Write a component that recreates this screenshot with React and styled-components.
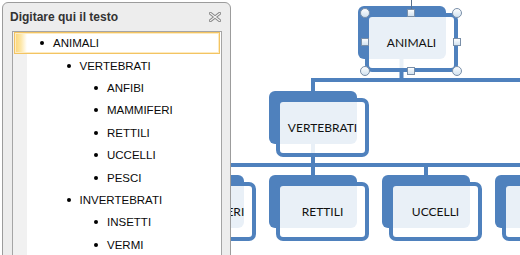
import React from 'react';
import styled, {createGlobalStyle} from 'styled-components';

const GlobalStyle = createGlobalStyle`
  html, body {
    margin: 0;
    padding: 0;
    background: #ffffff;
  }
  body {
    width: 520px;
    height: 255px;
    overflow: hidden;
  }
`;

const BLUE = '#4f81bd';

const Stage = styled.div`
  position: relative;
  width: 520px;
  height: 255px;
  overflow: hidden;
  background: #ffffff;
`;

const Canvas = styled.div`
  position: relative;
  width: 520px;
  height: 255px;
`;

const Layer = styled.svg`
  position: absolute;
  left: 0;
  top: 0;
  width: 520px;
  height: 255px;
  overflow: visible;
`;

const NodeWrap = styled.div`
  position: absolute;
  left: ${p => p.$x}px;
  top: ${p => p.$y}px;
  width: 100px;
  height: 66px;
`;

const Back = styled.div`
  position: absolute;
  left: 0;
  top: 0;
  width: 88px;
  height: 53px;
  border-radius: 6px;
  background: ${BLUE};
`;

const Front = styled.div`
  position: absolute;
  left: 7px;
  top: 7px;
  width: 93px;
  height: 59px;
  box-sizing: border-box;
  border: 4px solid ${BLUE};
  border-radius: 7px;
  background: rgba(255, 255, 255, 0.88);
  display: flex;
  align-items: center;
  justify-content: center;
  font-family: "Lato", "Liberation Sans", sans-serif;
  font-size: 12px;
  color: #111;
`;

const Panel = styled.div`
  position: absolute;
  left: 2px;
  top: 2px;
  width: 229px;
  height: 300px;
  box-sizing: border-box;
  border: 1px solid #9c9c9c;
  border-radius: 6px;
  background: #ededed;
  display: flex;
  flex-direction: column;
`;

const TitleBar = styled.div`
  height: 28px;
  display: flex;
  align-items: center;
  justify-content: space-between;
  padding: 0 9px 0 7px;
  font-family: "Liberation Sans", Arial, sans-serif;
  font-weight: bold;
  font-size: 12px;
  color: #333333;
`;

const ListBox = styled.div`
  margin-left: 9px;
  width: 210px;
  flex: 1;
  box-sizing: border-box;
  border: 1px solid #a5a5a5;
  background: linear-gradient(to right, #f1f1f1 0 14px, #ffffff 14px);
`;

const Row = styled.div`
  height: 22.4px;
  box-sizing: border-box;
  display: flex;
  align-items: center;
  gap: 9px;
  padding-left: ${p => 26 + p.$level * 27.5}px;
  font-family: "Liberation Sans", Arial, sans-serif;
  font-size: 11.5px;
  color: #0a0a0a;
  ${p => p.$active && `
    margin: 0 1px;
    padding-left: ${25 + p.$level * 27.5}px;
    border: 1px solid #f3c462;
    box-shadow: inset 0 0 0 1px #fdebc2;
    background: linear-gradient(to right, #fbd679 0, #fde7a8 6px, #ffffff 12px);
  `}
`;

const Bullet = styled.span`
  width: 4px;
  height: 4px;
  border-radius: 50%;
  background: #000;
  flex: none;
`;

const items = [
  [0, 'ANIMALI'],
  [1, 'VERTEBRATI'],
  [2, 'ANFIBI'],
  [2, 'MAMMIFERI'],
  [2, 'RETTILI'],
  [2, 'UCCELLI'],
  [2, 'PESCI'],
  [1, 'INVERTEBRATI'],
  [2, 'INSETTI'],
  [2, 'VERMI'],
];

const nodes = [
  {x: 358, y: 6, label: 'ANIMALI'},
  {x: 269, y: 91, label: 'VERTEBRATI'},
  {x: 156, y: 175, label: 'MAMMIFERI'},
  {x: 269, y: 175, label: 'RETTILI'},
  {x: 382, y: 175, label: 'UCCELLI'},
  {x: 495, y: 175, label: 'PESCI'},
];

const CloseIcon = () => (
  <svg width="12" height="10" viewBox="0 0 12 10">
    <path d="M1.5 1.5 L10.5 8.5 M10.5 1.5 L1.5 8.5" stroke="#8a8a8a" strokeWidth="3.2" strokeLinecap="square" />
    <path d="M1.5 1.5 L10.5 8.5 M10.5 1.5 L1.5 8.5" stroke="#f4f4f4" strokeWidth="1.2" strokeLinecap="square" />
  </svg>
);

const Connectors = () => (
  <Layer>
    <g fill={BLUE}>
      <rect x="399.5" y="58" width="4" height="22" />
      <rect x="311" y="78" width="209" height="4" />
      <rect x="311" y="80" width="4" height="12" />
      <rect x="311" y="142" width="4" height="24" />
      <rect x="100" y="163" width="420" height="4" />
      <rect x="198" y="165" width="4" height="11" />
      <rect x="311" y="165" width="4" height="11" />
      <rect x="424" y="165" width="4" height="11" />
      <rect x="537" y="165" width="4" height="11" />
    </g>
  </Layer>
);

const Selection = () => {
  const l = 365, r = 457, t = 13, b = 71;
  const mx = (l + r) / 2, my = (t + b) / 2;
  const circles = [[l, t], [r, t], [l, b], [r, b]];
  const squares = [[mx, t], [mx, b], [l, my], [r, my]];
  return (
    <Layer>
      <defs>
        <linearGradient id="hg" x1="0" y1="0" x2="0" y2="1">
          <stop offset="0" stopColor="#ffffff" />
          <stop offset="1" stopColor="#cfe0ee" />
        </linearGradient>
      </defs>
      <line x1="411.5" y1="0" x2="411.5" y2="9" stroke="#56708e" strokeWidth="1" />
      {circles.map(([cx, cy], i) => (
        <circle key={i} cx={cx} cy={cy} r="4.5" fill="url(#hg)" stroke="#7a8fa8" strokeWidth="1" />
      ))}
      {squares.map(([cx, cy], i) => (
        <rect key={i} x={cx - 3.5} y={cy - 3.5} width="7" height="7" fill="url(#hg)" stroke="#7a8fa8" strokeWidth="1" />
      ))}
    </Layer>
  );
};

export default function App() {
  return (
    <>
      <GlobalStyle />
      <Stage>
        <Canvas>
          <Connectors />
          {nodes.map(n => (
            <NodeWrap key={n.label} $x={n.x} $y={n.y}>
              <Back />
              <Front>{n.label}</Front>
            </NodeWrap>
          ))}
          <Selection />
        </Canvas>
        <Panel>
          <TitleBar>
            <span>Digitare qui il testo</span>
            <CloseIcon />
          </TitleBar>
          <ListBox>
            {items.map(([level, text], i) => (
              <Row key={text} $level={level} $active={i === 0}>
                <Bullet />
                {text}
              </Row>
            ))}
          </ListBox>
        </Panel>
      </Stage>
    </>
  );
}
